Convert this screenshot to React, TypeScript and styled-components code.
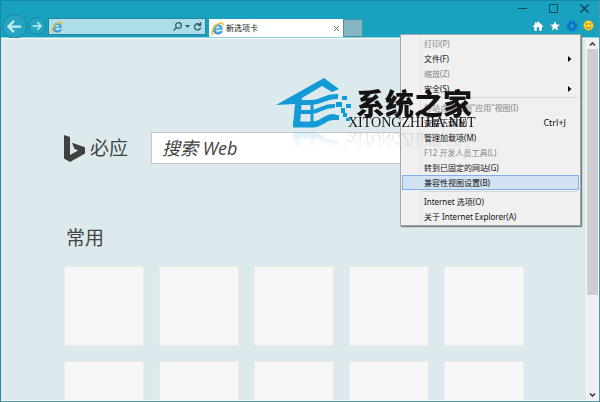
import React from "react";
import styled, { createGlobalStyle } from "styled-components";

const GlobalStyle = createGlobalStyle`
  *, *::before, *::after { box-sizing: border-box; }
  body {
    margin: 0;
    font-family: "Noto Sans", "Noto Sans CJK SC", sans-serif;
    font-size: 8px;
    color: #111;
  }
  button, input { font: inherit; color: inherit; padding: 0; border: 0; background: none; }
  svg { display: block; flex: none; }
`;

const Window = styled.div`
  position: relative;
  display: flex;
  flex-direction: column;
  height: 100vh;
  overflow: hidden;
  background: #ddeaed;
  border: 1px solid #158ba5;
  border-color: #158ba5 #4a98a7 #4a98a7 #158ba5;
`;

const Chrome = styled.header`
  flex: none;
  background: #18a2c0;
  border-bottom: 1px solid #8fd0dd;
`;

const TitleBar = styled.div`
  display: flex;
  justify-content: flex-end;
  gap: 18px;
  height: 16px;
  padding: 1px 8px 0 0;
`;

const IconButton = styled.button`
  display: flex;
  align-items: center;
  justify-content: center;
  flex: none;
`;

const CaptionButton = styled(IconButton)`
  width: 13px;
  height: 13px;
`;

const NavRow = styled.div`
  display: flex;
  align-items: center;
  height: 20px;
`;

const NavButton = styled(IconButton)<{ $size: number }>`
  width: ${(p) => p.$size}px;
  height: ${(p) => p.$size}px;
  margin: -2px 0 0 1px;
  border: 1px solid #1787a1;
  border-radius: 50%;
  background: #25a5c1;
`;

const AddressBar = styled.div`
  display: flex;
  align-items: center;
  flex: 0 1 158px;
  min-width: 0;
  height: 17px;
  margin: 0 3px 1px 2px;
  padding: 0 3px 0 2px;
  gap: 3px;
  border: 1px solid #2c8499;
  background: #acdfea;
`;

const AddressInput = styled.input`
  flex: 1;
  width: 0;
  min-width: 0;
  height: 13px;
  outline: none;
`;

const Tab = styled.div`
  display: flex;
  align-items: center;
  align-self: stretch;
  gap: 2px;
  width: 134px;
  margin-top: 2px;
  padding: 0 3px 0 2px;
  background: #fff;
`;

const TabTitle = styled.span`
  flex: 1;
  line-height: 14px;
`;

const NewTab = styled.button`
  align-self: stretch;
  width: 20px;
  margin-top: 2px;
  border: 1px solid #4295a8;
  background: #83b6c2;
`;

const Tools = styled.div`
  display: flex;
  align-items: center;
  gap: 5px;
  margin: 0 5px 3px auto;
`;

const Body = styled.div`
  display: flex;
  flex: 1;
  min-height: 0;
  border: 1px solid #f4fafb;
  border-left: 0;
`;

const Page = styled.main`
  flex: 1;
  overflow: hidden;
  padding: 93px 28px 0 63px;
`;

const SearchRow = styled.form`
  display: flex;
  align-items: center;
  gap: 23px;
`;

const Brand = styled.div`
  display: flex;
  align-items: center;
  gap: 5px;
  font-size: 19px;
  line-height: 32px;
  color: #444;
`;

const SearchInput = styled.input`
  flex: 1;
  min-width: 0;
  height: 32px;
  padding: 0 10px;
  border: 1px solid #c2c6c8;
  background: #fff;
  font-family: "Open Sans", "Noto Sans CJK SC", sans-serif;
  font-size: 18px;
  font-style: italic;
  outline: none;
  &::placeholder { color: #444; opacity: 1; }
`;

const Heading = styled.h1`
  margin: 60px 0 14px 2px;
  font-size: 19px;
  line-height: 28px;
  font-weight: 400;
  color: #444;
`;

const Tiles = styled.div`
  display: grid;
  grid-template-columns: repeat(5, 80px);
  grid-auto-rows: 80px;
  gap: 15px;
`;

const Tile = styled.button`
  border: 1px solid #e9ebeb;
  background: #f7f7f7;
`;

const ScrollBar = styled.div`
  display: flex;
  flex-direction: column;
  width: 12px;
  background: #f0f0f0;
  border-left: 1px solid #f6fafa;
`;

const ScrollButton = styled(IconButton)`
  width: 100%;
  height: 10px;
`;

const ScrollTrack = styled.div`
  flex: 1;
`;

const ScrollThumb = styled.div`
  height: 72%;
  background: #cdcdcd;
`;

const Menu = styled.div`
  position: absolute;
  z-index: 1;
  top: 33px;
  right: 18px;
  width: 181px;
  padding: 1px;
  border: 1px solid #a2a6a8;
  background: linear-gradient(90deg, #f0f0f0 19px, #e2e3e3 19px, #e2e3e3 20px, #f0f0f0 20px);
  box-shadow: 1px 1px 1px #717d80;
`;

const MenuItem = styled.button<{ $selected?: boolean }>`
  display: flex;
  align-items: center;
  width: 100%;
  height: 15px;
  padding: 0 6px 0 21px;
  border: 1px solid ${(p) => (p.$selected ? "#7eb0e6" : "transparent")};
  background: ${(p) => (p.$selected ? "#d1e2f2" : "transparent")};
  line-height: 13px;
  white-space: nowrap;
  text-align: left;
  &:disabled { color: #858585; }
`;

const MenuLabel = styled.span`
  flex: 1;
`;

const Shortcut = styled.span`
  padding-right: 6px;
  font-size: 9px;
`;

const Separator = styled.hr`
  height: 1px;
  margin: 1px 2px 2px 20px;
  border: 0;
  background: #d7d7d7;
`;

const Watermark = styled.div`
  position: absolute;
  z-index: 2;
  top: 77px;
  left: 274px;
  display: flex;
  align-items: flex-start;
  color: #171213;
  pointer-events: none;
  -webkit-box-reflect: below 2px linear-gradient(transparent 65%, rgba(0, 0, 0, 0.16));
`;

const WatermarkText = styled.div`
  display: flex;
  flex-direction: column;
  margin: 12px 0 0 -3px;
`;

const WatermarkName = styled.strong`
  padding-left: 8px;
  font-size: 29px;
  line-height: 27px;
  font-weight: 900;
`;

const WatermarkSite = styled.span`
  font-family: "Liberation Serif", serif;
  font-size: 14px;
  line-height: 12px;
`;

const IELogo = ({ size = 13 }: { size?: number }) => (
  <svg width={size} height={size} viewBox="0 0 13 13" fill="none" aria-hidden="true">
    <circle cx="6.8" cy="7" r="5" fill="#4aa5e2" />
    <path d="M4.8 6.2C5 3.9 8.6 3.9 8.9 6.2ZM4.7 7.8H12V9H9.2C8 10.5 5.2 10.3 4.7 7.8Z" fill="#d7f0fb" />
    <path d="M11.4 9.2A4.7 4.7 0 0 1 2.6 9" stroke="#2482cf" strokeWidth="1" />
    <path d="M2.1 12C-.8 11.2 2 5.8 5.6 3 9.2.2 12.6.3 11.9 3" stroke="#f5bd27" strokeWidth="1.5" strokeLinecap="round" />
  </svg>
);

const Arrow = ({ size, flip }: { size: number; flip?: boolean }) => (
  <svg width={size} height={size} viewBox="0 0 16 16" fill="none" stroke="#c3eef6" strokeWidth="2.4" aria-hidden="true">
    <path d={flip ? "M1 8H14M8.5 2L14.5 8L8.5 14" : "M15 8H2M7.5 2L1.5 8L7.5 14"} />
  </svg>
);

const Chevron = ({ up }: { up?: boolean }) => (
  <svg width="7" height="6" viewBox="0 0 7 6" fill="none" stroke="#404040" strokeWidth="1.6" aria-hidden="true">
    <path d={up ? "M1 4.5L3.5 2L6 4.5" : "M1 1.5L3.5 4L6 1.5"} />
  </svg>
);

type Entry = { label: string; disabled?: boolean; submenu?: boolean; shortcut?: string; selected?: boolean };

const menuGroups: Entry[][] = [
  [
    { label: "打印(P)", disabled: true },
    { label: "文件(F)", submenu: true },
    { label: "缩放(Z)", disabled: true },
    { label: "安全(S)", submenu: true },
  ],
  [
    { label: "将站点添加到\"应用\"视图(I)", disabled: true },
    { label: "查看下载(N)", shortcut: "Ctrl+J" },
    { label: "管理加载项(M)" },
    { label: "F12 开发人员工具(L)", disabled: true },
    { label: "转到已固定的网站(G)" },
    { label: "兼容性视图设置(B)", selected: true },
  ],
  [{ label: "Internet 选项(O)" }, { label: "关于 Internet Explorer(A)" }],
];

export default function App() {
  return (
    <>
      <GlobalStyle />
      <Window>
        <Chrome>
          <TitleBar>
            <CaptionButton aria-label="最小化">
              <svg width="9" height="9" viewBox="0 0 9 9"><path d="M0 4.5H9" stroke="#164d5a" /></svg>
            </CaptionButton>
            <CaptionButton aria-label="最大化">
              <svg width="9" height="9" viewBox="0 0 9 9"><path d="M.5.5H8.5V8.5H.5Z" fill="none" stroke="#164d5a" /></svg>
            </CaptionButton>
            <CaptionButton aria-label="关闭">
              <svg width="9" height="9" viewBox="0 0 9 9"><path d="M.5.5L8.5 8.5M8.5.5L.5 8.5" stroke="#123f4a" strokeWidth="1.2" /></svg>
            </CaptionButton>
          </TitleBar>
          <NavRow>
            <NavButton $size={25} aria-label="后退"><Arrow size={15} /></NavButton>
            <NavButton $size={18} aria-label="前进"><Arrow size={10} flip /></NavButton>
            <AddressBar>
              <IELogo size={12} />
              <AddressInput type="text" aria-label="地址" />
              <IconButton aria-label="搜索">
                <svg width="9" height="9" viewBox="0 0 9 9" fill="none" stroke="#345c66" strokeWidth="1.3"><circle cx="5.5" cy="3.5" r="2.8" /><path d="M3.6 5.4L.5 8.5" /></svg>
              </IconButton>
              <IconButton aria-label="显示地址列表">
                <svg width="5" height="3" viewBox="0 0 5 3"><path d="M0 0H5L2.5 3Z" fill="#345c66" /></svg>
              </IconButton>
              <IconButton aria-label="刷新">
                <svg width="9" height="9" viewBox="0 0 9 9" fill="none" stroke="#345c66" strokeWidth="1.3"><path d="M7.2 3.2A3.1 3.1 0 1 0 7.6 5.5M7.6.3V3.3H4.6" /></svg>
              </IconButton>
            </AddressBar>
            <Tab>
              <IELogo />
              <TabTitle>新选项卡</TabTitle>
              <IconButton aria-label="关闭选项卡">
                <svg width="7" height="7" viewBox="0 0 7 7"><path d="M1 1L6 6M6 1L1 6" stroke="#747474" /></svg>
              </IconButton>
            </Tab>
            <NewTab aria-label="新建选项卡" />
            <Tools>
              <IconButton aria-label="主页">
                <svg width="12" height="12" viewBox="0 0 12 12"><path d="M6 1L11.5 6.3L10.5 7.2L10 6.8V11H7V7.5H5V11H2V6.8L1.5 7.2L.5 6.3L2.5 4.4V2H4V3Z" fill="#fff" stroke="#247c90" strokeWidth=".4" /></svg>
              </IconButton>
              <IconButton aria-label="收藏夹">
                <svg width="12" height="12" viewBox="0 0 12 12"><path d="M6 .6L7.5 4.2L11.5 4.4L8.4 7L9.5 11L6 8.7L2.5 11L3.6 7L.5 4.4L4.5 4.2Z" fill="#fff" stroke="#247c90" strokeWidth=".4" /></svg>
              </IconButton>
              <IconButton aria-label="工具">
                <svg width="12" height="12" viewBox="0 0 12 12" fill="none" stroke="#0870ca"><circle cx="6" cy="6" r="4.5" strokeWidth="2.2" strokeDasharray="2 1.53" /><circle cx="6" cy="6" r="3" strokeWidth="1.8" /></svg>
              </IconButton>
              <IconButton aria-label="发送笑脸">
                <svg width="11" height="11" viewBox="0 0 11 11"><circle cx="5.5" cy="5.5" r="5" fill="#fbd936" stroke="#a98d32" strokeWidth=".6" /><path d="M3.7 3V5M7.3 3V5M2.7 6.6C3.9 8.8 7.1 8.8 8.3 6.6" fill="none" stroke="#655423" strokeWidth=".9" /></svg>
              </IconButton>
            </Tools>
          </NavRow>
        </Chrome>

        <Body>
          <Page>
            <SearchRow>
              <Brand>
                <svg width="21" height="27" viewBox="0 0 21 27" aria-hidden="true"><path d="M0 0L6 2V20L14 15.4L10.4 13.7L8 7.8L21 12.3V18.4L6 27L0 23.5Z" fill="#404040" /></svg>
                <span>必应</span>
              </Brand>
              <SearchInput type="search" aria-label="搜索 Web" placeholder="搜索 Web" />
            </SearchRow>
            <Heading>常用</Heading>
            <Tiles>
              {Array.from({ length: 10 }, (_, i) => <Tile key={i} aria-label={`常用网站 ${i + 1}`} />)}
            </Tiles>
          </Page>
          <ScrollBar>
            <ScrollButton aria-label="向上滚动"><Chevron up /></ScrollButton>
            <ScrollTrack><ScrollThumb /></ScrollTrack>
            <ScrollButton aria-label="向下滚动"><Chevron /></ScrollButton>
          </ScrollBar>
        </Body>

        <Menu role="menu">
          {menuGroups.map((group, g) => (
            <React.Fragment key={g}>
              {g > 0 && <Separator />}
              {group.map((item) => (
                <MenuItem key={item.label} role="menuitem" disabled={item.disabled} $selected={item.selected}>
                  <MenuLabel>{item.label}</MenuLabel>
                  {item.shortcut && <Shortcut>{item.shortcut}</Shortcut>}
                  {item.submenu && <svg width="4" height="6" viewBox="0 0 4 6"><path d="M0 0L3.5 3L0 6Z" fill="#111" /></svg>}
                </MenuItem>
              ))}
            </React.Fragment>
          ))}
        </Menu>

        <Watermark>
          <svg width="76" height="50" viewBox="0 0 76 50" fill="none" stroke="#129bd6" aria-hidden="true">
            <path d="M1 27L49 0L64 11L57 14L47 8L27 20L25 47H18L20 26Z" fill="#129bd6" stroke="none" />
            <path d="M24 24.5H36C47 24.5 49 18 63 18.500" strokeWidth="5" />
            <path d="M23 34H36C45 34 48 27 60 28" strokeWidth="4" />
            <path d="M18 46.500H38C47 46.500 50 38 60 39" strokeWidth="6" />
            <path d="M37 24V47" strokeWidth="3" />
            <path d="M67 18H72V22H67ZM61 24H67V29H61ZM71 26H76V30H71ZM66 30H70V35H66ZM58 37H64V42H58ZM68 35H72V39H68ZM71 40H75V43H71Z" fill="#129bd6" stroke="none" />
          </svg>
          <WatermarkText>
            <WatermarkName>系统之家</WatermarkName>
            <WatermarkSite>XITONGZHIJIA.NET</WatermarkSite>
          </WatermarkText>
        </Watermark>
      </Window>
    </>
  );
}
